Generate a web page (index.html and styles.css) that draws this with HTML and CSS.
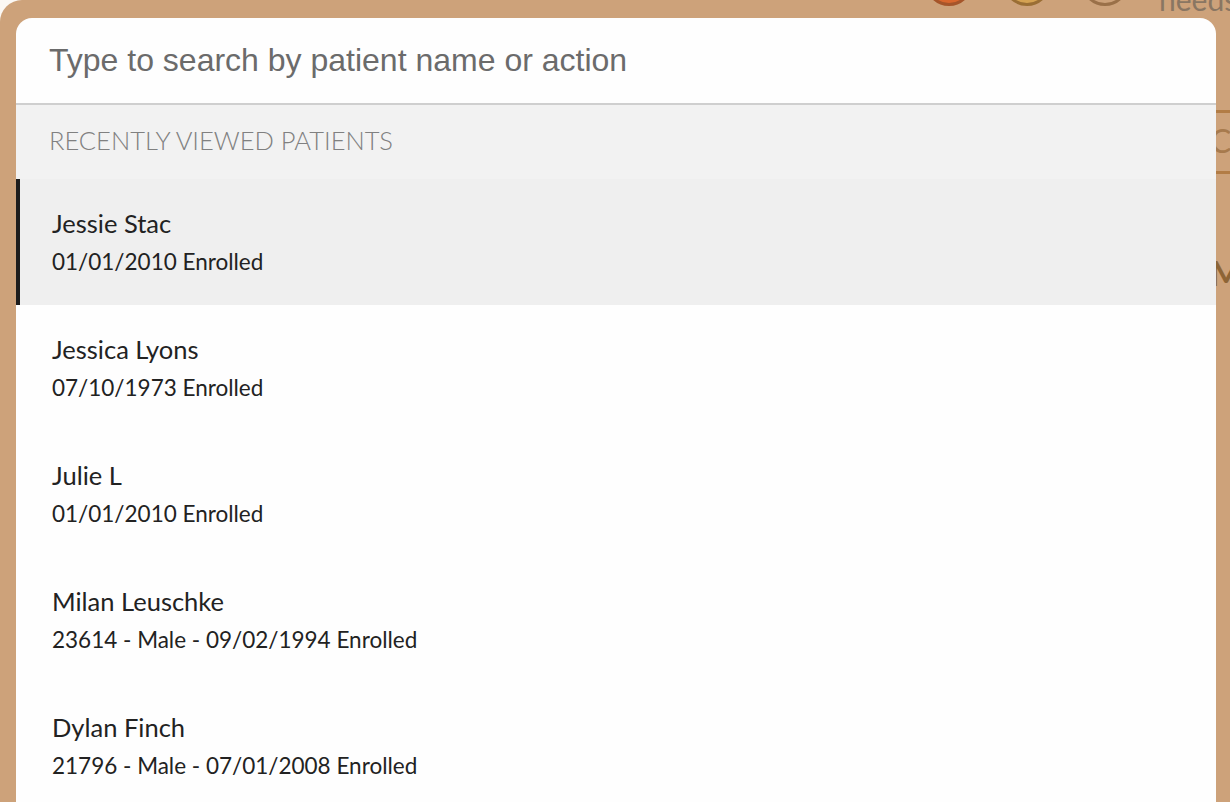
FILE: index.html
```html
<!DOCTYPE html>
<html lang="en">
<head>
    <meta charset="UTF-8">
    <meta name="viewport" content="width=device-width, initial-scale=1.0">
    <title>Patient Search</title>
    <link rel="stylesheet" href="styles.css">
</head>
<body>
    <div class="screen">
        <!-- Page behind the overlay -->
        <div class="app">
            <div class="app-header">
                <span class="dot dot-orange"></span>
                <span class="dot dot-yellow"></span>
                <span class="dot dot-brown"></span>
                <span class="header-text">needs</span>
            </div>
            <div class="app-side">
                <div class="side-button">Create</div>
                <div class="side-title">Most</div>
            </div>
        </div>

        <!-- Search overlay -->
        <div class="overlay">
            <div class="search-panel">
                <div class="search-box">
                    <input type="text" class="search-input" placeholder="Type to search by patient name or action">
                </div>
                <div class="section-title">RECENTLY VIEWED PATIENTS</div>
                <ul class="patient-list">
                    <li class="patient active">
                        <div class="patient-name">Jessie Stac</div>
                        <div class="patient-info">01/01/2010 Enrolled</div>
                    </li>
                    <li class="patient">
                        <div class="patient-name">Jessica Lyons</div>
                        <div class="patient-info">07/10/1973 Enrolled</div>
                    </li>
                    <li class="patient">
                        <div class="patient-name">Julie L</div>
                        <div class="patient-info">01/01/2010 Enrolled</div>
                    </li>
                    <li class="patient">
                        <div class="patient-name">Milan Leuschke</div>
                        <div class="patient-info">23614 - Male - 09/02/1994 Enrolled</div>
                    </li>
                    <li class="patient">
                        <div class="patient-name">Dylan Finch</div>
                        <div class="patient-info">21796 - Male - 07/01/2008 Enrolled</div>
                    </li>
                </ul>
            </div>
        </div>
    </div>
</body>
</html>
```

FILE: styles.css
```css
* {
    box-sizing: border-box;
}
html, body {
    margin: 0;
    height: 100%;
    overflow: hidden;
}
body {
    background-color: #fbf8f4;
    font-family: "Lato", "Open Sans", sans-serif;
}
.screen {
    position: relative;
    height: 100%;
    background-color: #cda27a;
    border-top-left-radius: 22px;
    overflow: hidden;
}

.app {
    height: 100%;
}
.app-header {
    display: flex;
    align-items: flex-end;
    height: 8px;
    padding-left: 925px;
    gap: 30px;
}
.dot {
    flex: none;
    width: 48px;
    height: 48px;
    border-radius: 50%;
    border: 3px solid #9a6a37;
    margin-bottom: 2px;
}
.dot-orange {
    background-color: #d8672e;
    border-color: #a5552a;
}
.dot-yellow {
    background-color: #d4a253;
    border-color: #9a6e34;
}
.dot-brown {
    background-color: #cda27a;
    border-color: #9a7048;
}
.header-text {
    font-family: "Lato", sans-serif;
    font-size: 30px;
    line-height: 1;
    color: #8a7662;
    margin-bottom: -6px;
}
.app-side {
    padding-left: 1210px;
    padding-top: 102px;
}
.side-button {
    height: 64px;
    border-top: 3px solid #b27c45;
    border-bottom: 3px solid #b27c45;
    color: #a77a4d;
    font-size: 32px;
    line-height: 56px;
    white-space: nowrap;
}
.side-title {
    margin-top: 78px;
    color: #8e6536;
    font-size: 34px;
    font-weight: bold;
    white-space: nowrap;
}

/* overlay */
.overlay {
    position: absolute;
    top: 18px;
    left: 16px;
    width: 1200px;
    bottom: 0;
}
.search-panel {
    height: 100%;
    background: #fefefe;
    border-top-left-radius: 16px;
    border-top-right-radius: 16px;
    overflow: hidden;
}
.search-box {
    height: 87px;
    border-bottom: 2px solid #cfcfcf;
    padding: 0 33px;
    display: flex;
    align-items: center;
}
.search-input {
    width: 100%;
    border: none;
    outline: none;
    background: transparent;
    font-family: "Liberation Sans", Arial, sans-serif;
    font-size: 32px;
    color: #333;
    padding: 0;
}
.search-input::placeholder {
    color: #6b6b6b;
}
.section-title {
    height: 74px;
    background: #f2f2f2;
    padding: 0 0 5px 33px;
    display: flex;
    align-items: center;
    font-size: 25.5px;
    font-weight: 300;
    color: #808080;
}
.patient-list {
    list-style: none;
    margin: 0;
    padding: 0;
}
.patient {
    height: 126px;
    padding: 26px 0 0 32px;
    border-left: 4px solid transparent;
    color: #222;
}
.patient.active {
    background: #efefef;
    border-left-color: #1c1c1c;
}
.patient-name {
    font-size: 25.5px;
    line-height: 36px;
}
.patient-info {
    font-size: 22.5px;
    line-height: 30px;
    margin-top: 6px;
}
```
